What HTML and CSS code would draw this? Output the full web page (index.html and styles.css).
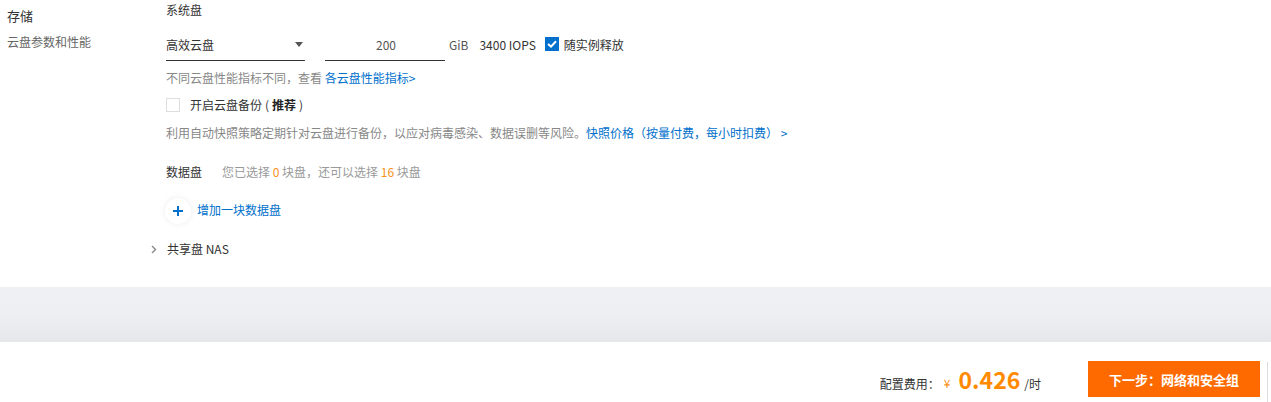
FILE: index.html
```html
<!DOCTYPE html>
<html lang="zh-CN">

<head>
  <meta charset="UTF-8">
  <meta name="viewport" content="width=device-width, initial-scale=1.0">
  <title>存储配置</title>
  <link rel="stylesheet" href="styles.css">
</head>

<body>
  <div class="section">
    <div class="side">
      <div class="side-title">存储</div>
      <div class="side-desc">云盘参数和性能</div>
    </div>

    <div class="main">
      <div class="label">系统盘</div>

      <div class="disk-row">
        <div class="select">
          <span>高效云盘</span>
          <span class="caret"></span>
        </div>
        <div class="size-input">200</div>
        <span class="unit">GiB</span>
        <span class="iops">3400 IOPS</span>
        <label class="check">
          <span class="box checked">
            <svg width="10" height="8" viewBox="0 0 10 8"><path d="M1 4 L4 6.6 L9 1.2" fill="none" stroke="#fff" stroke-width="2" /></svg>
          </span>
          随实例释放
        </label>
      </div>

      <div class="tip">不同云盘性能指标不同，查看 <a href="#">各云盘性能指标&gt;</a></div>

      <label class="check backup">
        <span class="box"></span>
        <span>开启云盘备份<span class="paren">(</span><b>推荐</b><span class="paren">)</span></span>
      </label>

      <div class="tip">利用自动快照策略定期针对云盘进行备份，以应对病毒感染、数据误删等风险。<a href="#">快照价格（按量付费，每小时扣费） &gt;</a></div>

      <div class="data-disk">
        <span class="label">数据盘</span>
        <span class="count">您已选择 <em>0</em> 块盘，还可以选择 <em>16</em> 块盘</span>
      </div>

      <div class="add-disk">
        <span class="plus">
          <svg width="12" height="12" viewBox="0 0 12 12"><path d="M6 1 V11 M1 6 H11" stroke="#0070cc" stroke-width="2" /></svg>
        </span>
        <a href="#">增加一块数据盘</a>
      </div>

      <div class="nas">
        <span class="chevron">
          <svg width="6" height="9" viewBox="0 0 6 9"><path d="M1 1 L4.5 4.5 L1 8" fill="none" stroke="#888" stroke-width="1.4" /></svg>
        </span>
        共享盘 NAS
      </div>
    </div>
  </div>

  <div class="band"></div>

  <div class="footer">
    <span class="fee-label">配置费用：</span>
    <span class="yen">¥</span>
    <span class="price">0.426</span>
    <span class="per">/时</span>
    <button class="next-btn">下一步：网络和安全组</button>
    <span class="edge"></span>
  </div>
</body>

</html>
```

FILE: styles.css
```css
body {
  font-family: "Noto Sans CJK SC", "Noto Sans", sans-serif;
  font-size: 12px;
  color: #333;
  background-color: #fff;
  margin: 0;
  padding: 0;
}

a {
  color: #0070cc;
  text-decoration: none;
}

/* Storage section */
.section {
  display: flex;
  height: 287px;
}

.side {
  width: 159px;
  padding: 7px 0 0 7px;
}

.side-title {
  font-size: 13px;
  color: #333;
  line-height: 18px;
}

.side-desc {
  margin-top: 9px;
  color: #666;
  line-height: 16px;
}

.main {
  display: flex;
  flex-direction: column;
  padding-top: 2px;
}

.label {
  color: #333;
  line-height: 16px;
}

.disk-row {
  display: flex;
  align-items: center;
  margin-top: 9px;
  height: 34px;
}

.select {
  width: 139px;
  height: 33px;
  border-bottom: 1px solid #333;
  display: flex;
  align-items: center;
  justify-content: space-between;
  padding-top: 1px;
  box-sizing: border-box;
}

.caret {
  width: 0;
  height: 0;
  border-left: 4px solid transparent;
  border-right: 4px solid transparent;
  border-top: 5px solid #555;
  margin-right: 2px;
}

.size-input {
  width: 120px;
  height: 33px;
  margin-left: 20px;
  border-bottom: 1px solid #333;
  box-sizing: border-box;
  padding-top: 1px;
  padding-left: 2px;
  display: flex;
  align-items: center;
  justify-content: center;
  color: #555;
}

.unit {
  margin-left: 4px;
  color: #555;
}

.iops {
  margin-left: 11px;
  color: #333;
}

.check {
  display: flex;
  align-items: center;
  gap: 5px;
  color: #333;
}

.disk-row .check {
  margin-left: 9px;
}

.box {
  width: 12px;
  height: 12px;
  border: 1px solid #ddd;
  background-color: #fff;
  display: flex;
  align-items: center;
  justify-content: center;
}

.box.checked {
  background-color: #0070cc;
  border-color: #0070cc;
}

.tip {
  color: #888;
  line-height: 16px;
  margin-top: 9px;
}

.backup {
  margin-top: 11px;
  gap: 10px;
  line-height: 16px;
}

.paren {
  margin: 0 3px;
}

.backup b {
  color: #222;
  font-weight: 600;
}

.backup + .tip {
  margin-top: 12px;
}

.data-disk {
  display: flex;
  gap: 20px;
  margin-top: 23px;
  line-height: 16px;
}

.count {
  color: #999;
}

.count em {
  font-style: normal;
  color: #f7911c;
}

.add-disk {
  display: flex;
  align-items: center;
  gap: 6px;
  margin-top: 18px;
  margin-left: -1px;
}

.plus {
  width: 26px;
  height: 26px;
  border-radius: 50%;
  background-color: #fff;
  box-shadow: 0 0 6px rgba(0, 0, 0, 0.08);
  display: flex;
  align-items: center;
  justify-content: center;
}

.add-disk a {
  margin-top: -3px;
}

.nas {
  display: flex;
  align-items: center;
  margin-left: -16px;
  margin-top: 17px;
  color: #333;
  line-height: 16px;
}

.chevron {
  width: 16px;
  display: flex;
  align-items: center;
  padding-left: 1px;
}

/* Gray band */
.band {
  height: 55px;
  background: linear-gradient(#eff0f3, #eeeff2 50%, #e6e7ea);
}

/* Footer */
.footer {
  height: 60px;
  display: flex;
  align-items: center;
  justify-content: flex-end;
  padding-top: 14px;
  box-sizing: border-box;
}

.fee-label {
  color: #333;
  margin-top: 8px;
}

.yen {
  color: #f7911c;
  margin-left: 4px;
  margin-top: 6px;
}

.price {
  color: #ff8a00;
  font-size: 23px;
  font-weight: 600;
  margin-left: 8px;
  line-height: 28px;
}

.per {
  color: #333;
  margin-left: 4px;
  margin-top: 8px;
}

.next-btn {
  margin-left: 47px;
  width: 172px;
  height: 36px;
  background-color: #ff6a00;
  color: #fff;
  border: none;
  font-family: inherit;
  font-size: 13px;
  font-weight: bold;
  cursor: pointer;
}

.edge {
  width: 3px;
  height: 40px;
  margin-left: 7px;
  border-left: 1px solid #ddd;
  align-self: flex-end;
}
```
